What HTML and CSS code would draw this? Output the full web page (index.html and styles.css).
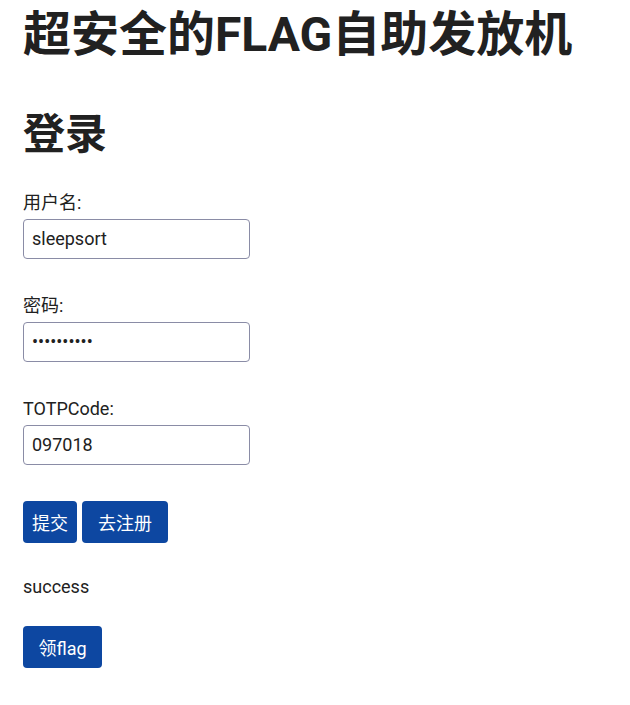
FILE: index.html
```html
<!DOCTYPE html>
<html lang="zh">
<head>
<meta charset="utf-8">
<title>超安全的FLAG自助发放机</title>
<link rel="stylesheet" href="styles.css">
</head>
<body>
<div class="page">
    <h1>超安全的FLAG自助发放机</h1>
    <h2>登录</h2>
    <form class="login">
        <div class="field">
            <label for="username">用户名:</label>
            <input id="username" type="text" value="sleepsort">
        </div>
        <div class="field">
            <label for="password">密码:</label>
            <input id="password" type="password" value="0123456789">
        </div>
        <div class="field">
            <label for="totp">TOTPCode:</label>
            <input id="totp" type="text" value="097018">
        </div>
        <div class="actions">
            <button type="button" class="btn">提交</button>
            <button type="button" class="btn">去注册</button>
        </div>
    </form>
    <p class="status">success</p>
    <button type="button" class="btn flag">领flag</button>
</div>
</body>
</html>
```

FILE: styles.css
```css
html, body {
    margin: 0;
    padding: 0;
    background: #fff;
}

body {
    font-family: Roboto, "Noto Sans CJK SC", sans-serif;
    color: #212121;
    font-size: 18px;
    line-height: 1.5;
}

.page {
    padding: 0 23px;
}

h1 {
    font-size: 48px;
    line-height: 1.2;
    font-weight: 700;
    margin: 6px 0 0;
    white-space: nowrap;
}

h2 {
    font-size: 42px;
    line-height: 1.2;
    font-weight: 700;
    margin: 46px 0 0;
}

.login {
    margin-top: 31px;
}

.field {
    display: flex;
    flex-direction: column;
    align-items: flex-start;
    margin-bottom: 35px;
}

.field label {
    line-height: 24px;
}

.field input {
    box-sizing: border-box;
    width: 227px;
    height: 40px;
    margin-top: 4px;
    padding: 0 8px;
    border: 1px solid #8a8ca6;
    border-radius: 4px;
    font-family: inherit;
    font-size: 18px;
    color: #212121;
    background: #fff;
}

.actions {
    display: flex;
    gap: 5px;
    padding-top: 1px;
}

.btn {
    height: 42px;
    padding: 0 16px;
    border: none;
    border-radius: 4px;
    background: #0d47a1;
    color: #fff;
    font-family: inherit;
    font-size: 18px;
    cursor: pointer;
}

.actions .btn:first-child {
    padding: 0 9px;
}

.btn.flag {
    padding: 0 15.5px;
}

.status {
    margin: 30px 0 26px;
}
```
